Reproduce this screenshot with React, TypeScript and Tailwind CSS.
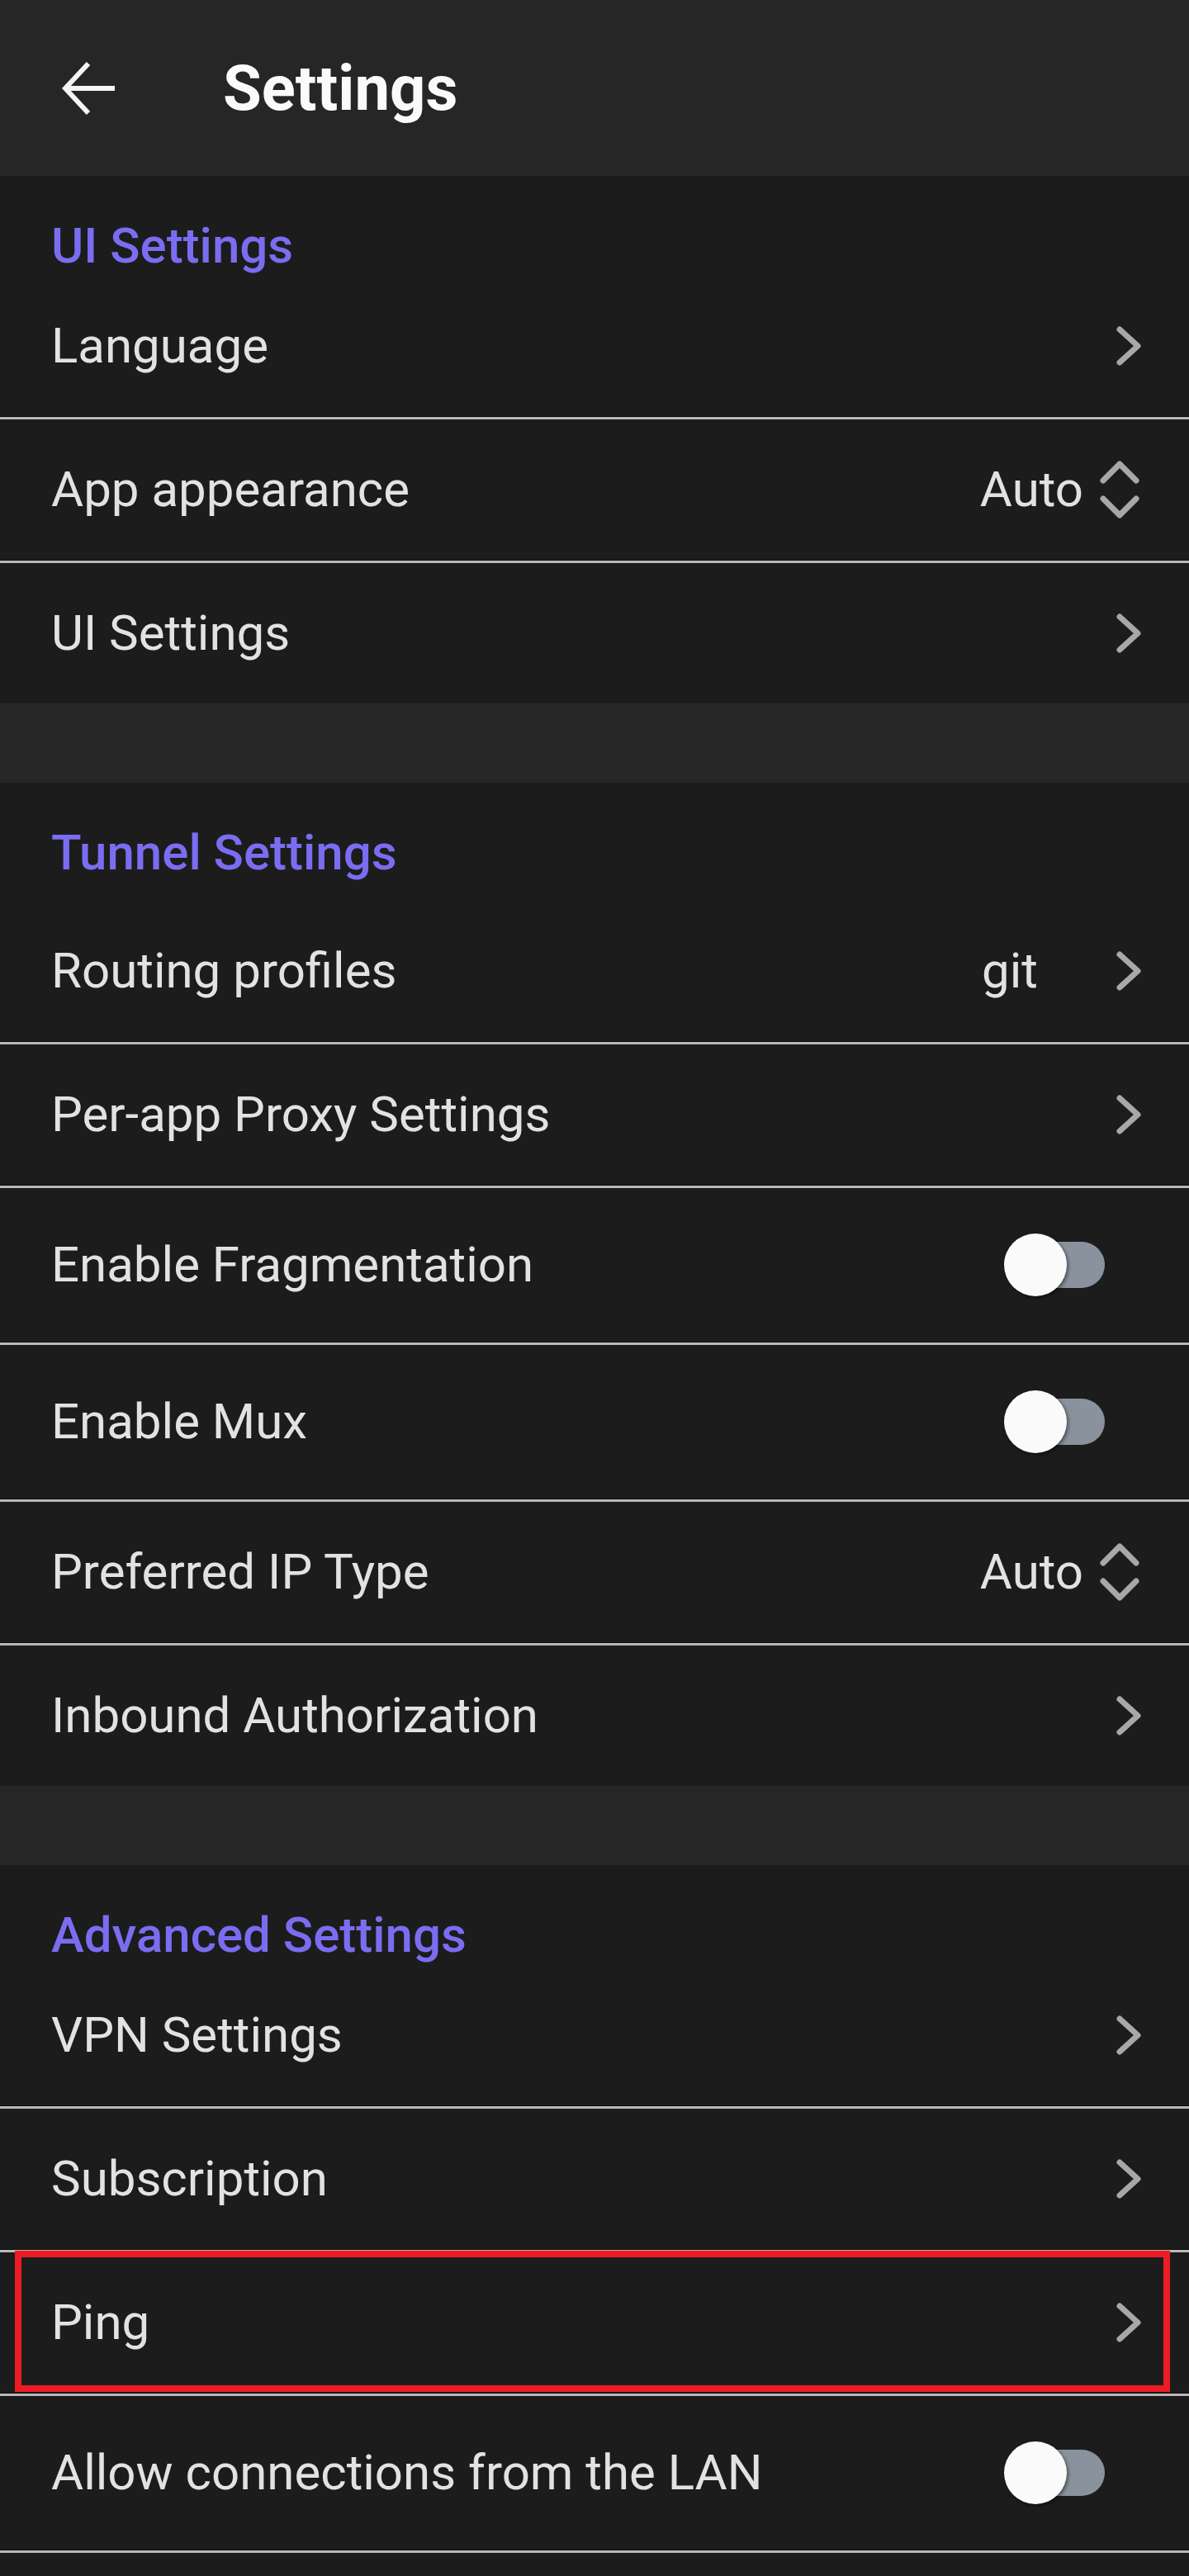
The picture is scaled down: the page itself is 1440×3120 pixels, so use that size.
import type { ReactNode } from 'react'

type Row =
  | { kind: 'nav'; label: string; value?: string; highlight?: boolean }
  | { kind: 'select'; label: string; value: string }
  | { kind: 'toggle'; label: string }

interface Section {
  title: string
  tall?: boolean
  last?: boolean
  rows: Row[]
}

const sections: Section[] = [
  {
    title: 'UI Settings',
    rows: [
      { kind: 'nav', label: 'Language' },
      { kind: 'select', label: 'App appearance', value: 'Auto' },
      { kind: 'nav', label: 'UI Settings' },
    ],
  },
  {
    title: 'Tunnel Settings',
    tall: true,
    rows: [
      { kind: 'nav', label: 'Routing profiles', value: 'git' },
      { kind: 'nav', label: 'Per-app Proxy Settings' },
      { kind: 'toggle', label: 'Enable Fragmentation' },
      { kind: 'toggle', label: 'Enable Mux' },
      { kind: 'select', label: 'Preferred IP Type', value: 'Auto' },
      { kind: 'nav', label: 'Inbound Authorization' },
    ],
  },
  {
    title: 'Advanced Settings',
    last: true,
    rows: [
      { kind: 'nav', label: 'VPN Settings' },
      { kind: 'nav', label: 'Subscription' },
      { kind: 'nav', label: 'Ping', highlight: true },
      { kind: 'toggle', label: 'Allow connections from the LAN' },
    ],
  },
]

function Chevron() {
  return (
    <svg className="w-[40px] h-[56px] shrink-0" viewBox="0 0 40 56" fill="none" stroke="#a8a8a8" strokeWidth={7} strokeLinecap="round" strokeLinejoin="round">
      <polyline points="9,8 31,28 9,48" />
    </svg>
  )
}

function Unfold() {
  return (
    <svg className="w-[56px] h-[80px] shrink-0" viewBox="0 0 56 80" fill="none" stroke="#a8a8a8" strokeWidth={7} strokeLinecap="round" strokeLinejoin="round">
      <polyline points="8,29 28,9 48,29" />
      <polyline points="8,51 28,71 48,51" />
    </svg>
  )
}

function Toggle() {
  return (
    <div className="relative w-[122px] h-[78px] shrink-0">
      <div className="absolute right-0 top-[11px] h-[56px] w-[100px] rounded-full bg-[#8a929d]" />
      <div className="absolute left-0 top-[1px] w-[76px] h-[76px] rounded-full bg-[#fafafa] shadow-[2px_2px_4px_rgba(0,0,0,0.45)]" />
    </div>
  )
}

function Divider() {
  return <div className="h-[4px] bg-[#b9b9b9] border-t border-[#0c0c0c]" />
}

function SettingRow({ row }: { row: Row }) {
  let right: ReactNode = null
  let pad = 'pr-[53px]'
  if (row.kind === 'nav') {
    right = (
      <div className="flex items-center gap-[90px]">
        {row.value && <span>{row.value}</span>}
        <Chevron />
      </div>
    )
  } else if (row.kind === 'select') {
    pad = 'pr-[56px]'
    right = (
      <div className="flex items-center gap-[16px]">
        <span>{row.value}</span>
        <Unfold />
      </div>
    )
  } else {
    pad = 'pr-[102px]'
    right = <Toggle />
  }
  return (
    <div className={`relative flex items-center justify-between pl-[62px] ${pad} ${row.kind === 'toggle' ? 'h-[186px]' : 'h-[170px]'} text-[60px] leading-none text-[#e2e2e2]`}>
      <span>{row.label}</span>
      {right}
      {row.kind === 'nav' && row.highlight && (
        <div className="absolute -top-[2px] bottom-[1px] left-[18px] right-[23px] border-[8px] border-[#ed1c24]" />
      )}
    </div>
  )
}

function SettingsSection({ section }: { section: Section }) {
  return (
    <section className="bg-[#1c1c1c]">
      <div className={`pl-[62px] pt-[55px] ${section.tall ? 'pb-[28px]' : 'pb-[6px]'}`}>
        <h2 className="text-[60px] leading-none font-medium text-[#7a6df1]">{section.title}</h2>
      </div>
      {section.rows.map((row, i) => (
        <div key={row.label}>
          {i > 0 && <Divider />}
          <SettingRow row={row} />
        </div>
      ))}
      {section.last && <Divider />}
    </section>
  )
}

export default function App() {
  return (
    <div className="min-h-screen bg-[#1c1c1c] text-white" style={{ fontFamily: 'Roboto, "Noto Sans", sans-serif' }}>
      <header className="h-[213px] bg-[#262626] flex items-center">
        <button className="ml-[75px] w-[66px] h-[66px] flex items-center justify-center" aria-label="Back">
          <svg className="w-[66px] h-[66px]" viewBox="0 0 66 66" fill="none" stroke="#f5f5f5" strokeWidth={6} strokeLinecap="butt" strokeLinejoin="miter">
            <line x1="4" y1="33" x2="64" y2="33" />
            <polyline points="32,3 4,33 32,63" />
          </svg>
        </button>
        <h1 className="ml-[129px] text-[76px] leading-none font-bold text-[#fafafa]">Settings</h1>
      </header>

      <main className="flex flex-col gap-[96px] bg-[#262626]">
        {sections.map((s) => (
          <SettingsSection key={s.title} section={s} />
        ))}
      </main>
    </div>
  )
}
